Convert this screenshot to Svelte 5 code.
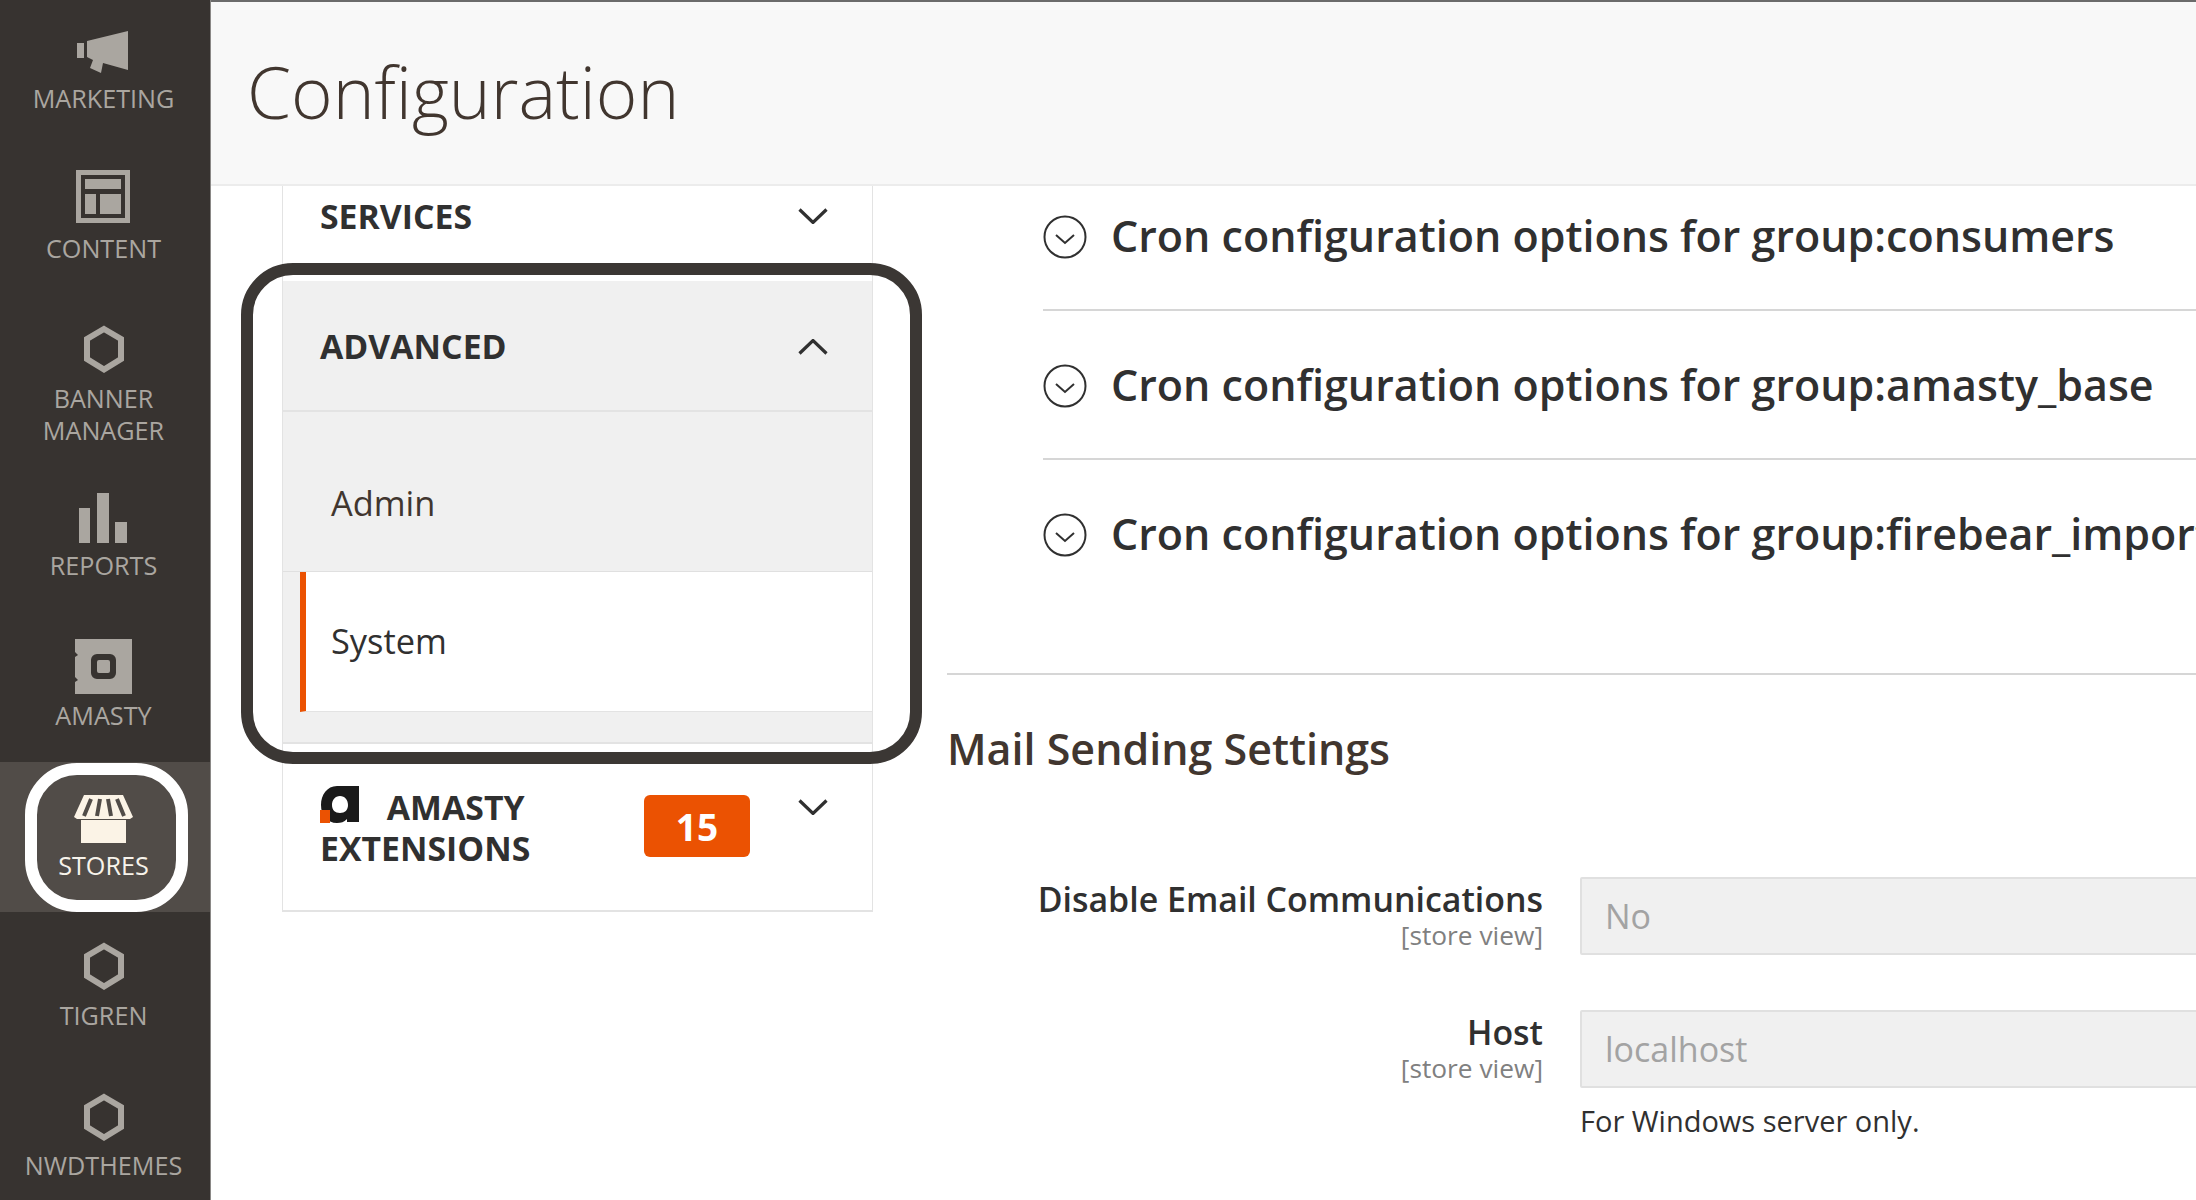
<script>
  const crons = ['consumers', 'amasty_base', 'firebear_import'];
</script>

<div class="page">
  <aside class="sidebar">
    <ul class="menu">
      <li class="item">
        <svg viewBox="0 0 60 56" width="60" height="56">
          <path d="M3 20h7v15H3zM13 18L54 8v39L29 40l-2 10-11-5 3-8-6-3z" />
        </svg>
        <span>MARKETING</span>
      </li>
      <li class="item">
        <svg viewBox="0 0 60 56" width="60" height="56">
          <path fill-rule="evenodd" d="M2-3h54v53H2zM7 2v43h44V2zM11 6h36v10H11zM11 21h11v20H11zM26 21h21v20H26z" />
        </svg>
        <span>CONTENT</span>
      </li>
      <li class="item two">
        <svg viewBox="0 0 60 56" width="60" height="56">
          <path class="hex" d="M30 6L47 16V36L30 46.500L13 36V16z" />
        </svg>
        <span>BANNER<br />MANAGER</span>
      </li>
      <li class="item">
        <svg viewBox="0 0 60 56" width="60" height="56">
          <path d="M5 18h11v35H5zM23 3h12v50H23zM41 32h12v21H41z" />
        </svg>
        <span>REPORTS</span>
      </li>
      <li class="item">
        <svg viewBox="0 0 60 56" width="60" height="56">
          <path fill-rule="evenodd" d="M1-1h57v55H1v-12l3-2-3-3V17l3-2-3-3zM23 14a6 6 0 0 0-6 6v13a6 6 0 0 0 6 6h13a6 6 0 0 0 6-6V20a6 6 0 0 0-6-6zM25 20h9a2 2 0 0 1 2 2v9a2 2 0 0 1-2 2h-9a2 2 0 0 1-2-2v-9a2 2 0 0 1 2-2z" />
        </svg>
        <span>AMASTY</span>
      </li>
      <li class="item active">
        <svg viewBox="0 0 60 56" width="60" height="56">
          <path d="M7 30h45v23H7z" />
          <path d="M10 5h39l10 22-3 2H3l-3-2z" />
          <path class="slats" d="M17 9l-7 17M26 9l-3 17M34 9l3 17M43 9l7 17" />
        </svg>
        <span>STORES</span>
        <div class="store-ring"></div>
      </li>
      <li class="item">
        <svg viewBox="0 0 60 56" width="60" height="56">
          <path class="hex" d="M30 6L47 16V36L30 46.500L13 36V16z" />
        </svg>
        <span>TIGREN</span>
      </li>
      <li class="item">
        <svg viewBox="0 0 60 56" width="60" height="56">
          <path class="hex" d="M30 7L47 17V37L30 47.500L13 37V17z" />
        </svg>
        <span>NWDTHEMES</span>
      </li>
    </ul>
  </aside>

  <main class="main">
    <header class="page-title">
      <h1>Configuration</h1>
    </header>

    <div class="columns">
      <nav class="tabs">
        <div class="ring"></div>
        <div class="tab services">
          <h3>SERVICES</h3>
          <svg class="chev" viewBox="0 0 30 16" width="30" height="16"><path d="M1.500 1.500L15 14.500L28.500 1.500" /></svg>
        </div>
        <div class="tab advanced">
          <h3>ADVANCED</h3>
          <svg class="chev" viewBox="0 0 30 16" width="30" height="16"><path d="M1.500 14.500L15 1.500L28.500 14.500" /></svg>
        </div>
        <div class="sub">
          <div class="sub-item admin">Admin</div>
          <div class="sub-item system">System</div>
        </div>
        <div class="tab amasty">
          <h3>
            <svg class="logo" viewBox="0 0 40 38" width="40" height="38">
              <path fill="#1a1a1a" fill-rule="evenodd" d="M17 1h22v36H27v-3c-3 3-6 4-10 4C7 38 1 30 1 20S7 1 17 1zM20 11c-5 0-8 4-8 9s3 8 8 8 8-3 8-8-3-9-8-9z" />
              <path fill="#eb5202" d="M0 25h10v13H0z" />
            </svg>
            AMASTY<br />EXTENSIONS
          </h3>
          <span class="badge">15</span>
          <svg class="chev" viewBox="0 0 30 16" width="30" height="16"><path d="M1.500 1.500L15 14.500L28.500 1.500" /></svg>
        </div>
      </nav>

      <section class="content">
        <div class="crons">
          {#each crons as name}
            <div class="cron">
              <svg viewBox="0 0 44 44" width="44" height="44">
                <circle cx="22" cy="22" r="20.500" />
                <path d="M13 20L22 28L31 20" />
              </svg>
              <span>Cron configuration options for group:{name}</span>
            </div>
          {/each}
        </div>

        <h2>Mail Sending Settings</h2>

        <div class="field first">
          <div class="label">
            <div>Disable Email Communications</div>
            <small>[store view]</small>
          </div>
          <div class="value">
            <div class="input">No</div>
          </div>
        </div>

        <div class="field">
          <div class="label">
            <div>Host</div>
            <small>[store view]</small>
          </div>
          <div class="value">
            <div class="input">localhost</div>
            <p class="note">For Windows server only.</p>
          </div>
        </div>
      </section>
    </div>
  </main>
</div>

<style>
  :global(body) {
    margin: 0;
    background: #fff;
    overflow: hidden;
  }

  .page {
    display: flex;
    height: 1200px;
    overflow: hidden;
    font-family: "Open Sans", sans-serif;
    color: #303030;
  }

  /* left admin menu */
  .sidebar {
    width: 211px;
    flex: none;
    background: #373330;
    border-right: 1px solid #8a8886;
    box-sizing: border-box;
    overflow: hidden;
  }
  .menu {
    list-style: none;
    margin: -5px 0 0;
    padding: 0;
  }
  .item {
    position: relative;
    display: flex;
    flex-direction: column;
    align-items: center;
    height: 150px;
    box-sizing: border-box;
    padding: 28px 3px 0 0;
    font-size: 25.200px;
    line-height: 32px;
    text-align: center;
    color: #aaa6a0;
  }
  .item.two {
    height: 167px;
  }
  .item svg {
    display: block;
    flex: none;
    margin-bottom: 3px;
    overflow: visible;
    fill: #aaa6a0;
  }
  .item .hex {
    fill: none;
    stroke: #aaa6a0;
    stroke-width: 6;
  }
  .item.active {
    background: #514c48;
    color: #f7f3eb;
  }
  .item.active svg {
    fill: #fbf3e6;
  }
  .item.active .slats {
    fill: none;
    stroke: #514c48;
    stroke-width: 4;
  }
  .store-ring {
    position: absolute;
    left: 25px;
    top: 1px;
    width: 163px;
    height: 149px;
    box-sizing: border-box;
    border: 12px solid #fff;
    border-radius: 52px;
  }

  .main {
    flex: 1;
    min-width: 0;
    display: flex;
    flex-direction: column;
  }
  .page-title {
    height: 186px;
    flex: none;
    box-sizing: border-box;
    display: flex;
    align-items: center;
    padding: 0 0 3px 36px;
    background: #f8f8f8;
    border-top: 2px solid #6b6b6b;
    border-bottom: 2px solid #ececec;
  }
  h1 {
    margin: 0;
    font-size: 71px;
    font-weight: 300;
    color: #41362f;
  }

  .columns {
    display: flex;
    flex: 1;
    min-height: 0;
  }

  /* config tabs */
  .tabs {
    position: relative;
    flex: none;
    width: 591px;
    margin-left: 71px;
    align-self: flex-start;
    box-sizing: border-box;
    border-left: 1px solid #e3e3e3;
    border-right: 1px solid #e3e3e3;
    border-bottom: 2px solid #e3e3e3;
  }
  .ring {
    position: absolute;
    left: -42px;
    top: 77px;
    width: 681px;
    height: 501px;
    box-sizing: border-box;
    border: 12px solid #3b3734;
    border-radius: 52px;
  }
  .tab {
    display: flex;
    justify-content: space-between;
    padding: 0 44px 0 37px;
    box-sizing: border-box;
  }
  h3 {
    margin: 0;
    font-size: 33.800px;
    line-height: 41px;
    font-weight: 700;
    color: #303030;
  }
  .chev {
    display: block;
    flex: none;
    fill: none;
    stroke: #303030;
    stroke-width: 3.200;
  }
  .services {
    height: 95px;
    padding-top: 10px;
  }
  .services .chev {
    margin-top: 12px;
  }
  .advanced {
    height: 131px;
    align-items: center;
    background: #f0f0f0;
    border-bottom: 2px solid #e3e3e3;
  }
  .advanced h3 {
    margin-top: 2px;
  }
  .advanced .chev {
    margin-top: 2px;
  }
  .sub {
    background: #f0f0f0;
    padding-bottom: 30px;
    border-bottom: 2px solid #e3e3e3;
  }
  .sub-item {
    display: flex;
    align-items: center;
    font-size: 34.400px;
    box-sizing: border-box;
  }
  .admin {
    height: 160px;
    padding: 21px 0 0 48px;
    color: #41362f;
    border-bottom: 1px solid #e0e0e0;
  }
  .system {
    height: 140px;
    margin-left: 17px;
    padding: 0 0 2px 25px;
    background: #fff;
    border-left: 6px solid #eb5202;
    border-bottom: 1px solid #e3e3e3;
    color: #303030;
  }
  .amasty {
    position: relative;
    height: 166px;
    padding-top: 41px;
  }
  .amasty h3 {
    white-space: nowrap;
  }
  .logo {
    display: inline-block;
    vertical-align: -3px;
    margin-right: 18px;
  }
  .badge {
    position: absolute;
    left: 361px;
    top: 51px;
    width: 106px;
    height: 62px;
    display: flex;
    align-items: center;
    justify-content: center;
    background: #eb5202;
    border-radius: 6px;
    color: #fff;
    font-size: 37px;
    font-weight: 700;
  }
  .amasty .chev {
    margin-top: 14px;
  }

  /* right side */
  .content {
    flex: 1;
    min-width: 0;
    margin-left: 74px;
    overflow: hidden;
  }
  .crons {
    margin-left: 96px;
    padding-bottom: 64px;
  }
  .cron {
    display: flex;
    align-items: center;
    height: 149px;
    box-sizing: border-box;
    font-size: 43px;
    font-weight: 600;
    color: #303030;
    white-space: nowrap;
    border-bottom: 2px solid #d6d6d6;
  }
  .cron:first-child {
    height: 125px;
    padding-bottom: 24px;
  }
  .cron:last-child {
    padding-bottom: 3px;
    border-bottom: 0;
  }
  .cron svg {
    flex: none;
    margin: 3px 24px 0 0;
    fill: none;
    stroke: #303030;
    stroke-width: 2;
  }
  h2 {
    margin: 0;
    padding-top: 47px;
    border-top: 2px solid #d6d6d6;
    font-size: 43px;
    line-height: 54px;
    font-weight: 600;
    color: #41362f;
  }
  .field {
    display: flex;
    margin-top: 55px;
  }
  .field.first {
    margin-top: 101px;
  }
  .label {
    width: 596px;
    flex: none;
    padding-top: 3px;
    text-align: right;
    font-size: 33.900px;
    line-height: 38px;
    font-weight: 600;
    color: #303030;
  }
  .label small {
    display: block;
    font-size: 26.300px;
    font-weight: 400;
    line-height: 35px;
    color: #808080;
  }
  .value {
    flex: none;
    width: 800px;
    margin-left: 37px;
  }
  .input {
    height: 78px;
    box-sizing: border-box;
    padding-left: 23px;
    display: flex;
    align-items: center;
    background: #f0f0f0;
    border: 2px solid #e0e0e0;
    border-radius: 2px;
    font-size: 34px;
    color: #a3a3a3;
  }
  .note {
    margin: 16px 0 0;
    font-size: 29px;
    line-height: 34px;
    color: #303030;
  }
</style>
